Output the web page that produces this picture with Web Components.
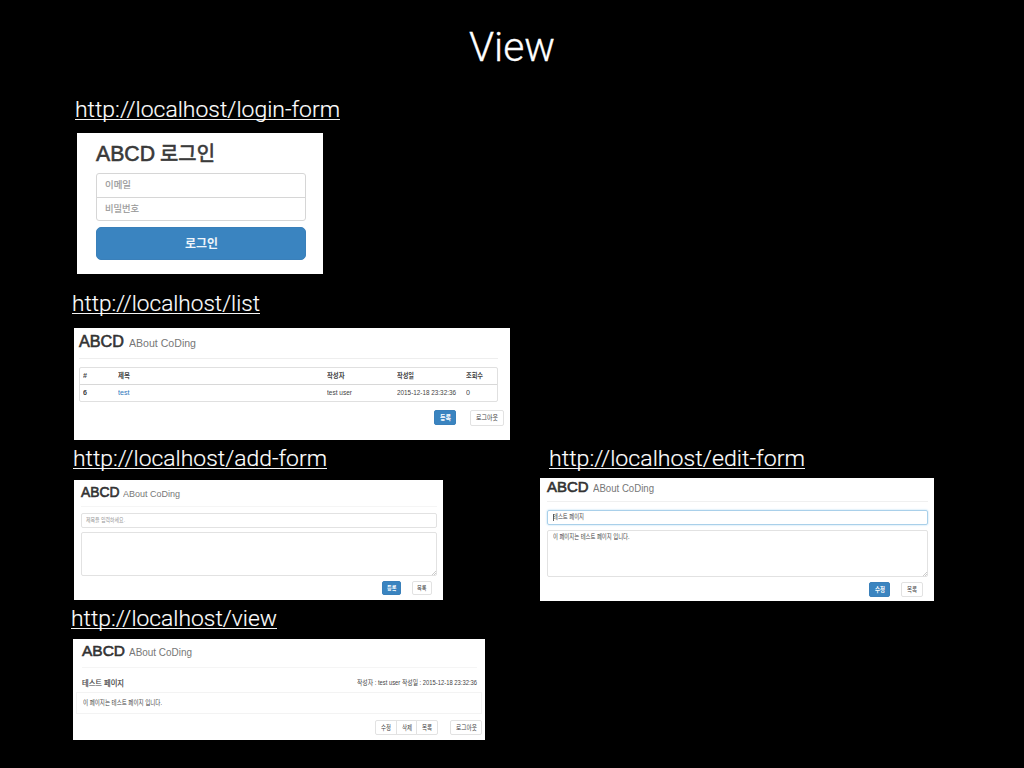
<!DOCTYPE html>
<html lang="ko">
<head>
<meta charset="utf-8">
<title>View</title>
<style>
body{margin:0;background:#000;width:1024px;height:768px;overflow:hidden}
</style>
</head>
<body>
<view-slide></view-slide>
<script>
const define = (name, css, html) => {
  const tpl = document.createElement('template');
  tpl.innerHTML = `<style>*{box-sizing:border-box}:host{display:block;box-sizing:border-box}${css}</style>${html}`;
  customElements.define(name, class extends HTMLElement {
    constructor() {
      super();
      this.attachShadow({mode: 'open'}).append(tpl.content.cloneNode(true));
    }
  });
};

/* One line of text, stretched to the width given in "w". */
class FitText extends HTMLElement {
  constructor() {
    super();
    this.attachShadow({mode: 'open'}).innerHTML =
      `<style>:host{display:block;flex:none;white-space:nowrap}span{display:inline-block;transform-origin:0 50%;vertical-align:top}</style><span><slot></slot></span>`;
  }
  connectedCallback() {
    const w = parseFloat(this.getAttribute('w'));
    this.style.width = w + 'px';
    const span = this.shadowRoot.querySelector('span');
    const natural = span.getBoundingClientRect().width;
    if (natural) span.style.transform = `scaleX(${w / natural})`;
  }
}

define('url-link',
  `:host{height:24px;width:max-content;border-bottom:1.5px solid #f4f4f4;font:300 22.5px/27px Roboto,"Noto Sans",sans-serif;color:#fff;-webkit-text-stroke:.15px #fff}`,
  `<slot></slot>`);

define('app-button',
  `:host{display:flex;flex:none;align-items:center;justify-content:center;border:1px solid #e2e2e2;border-radius:2px;background:#fff;color:#444;line-height:12px}
   :host([primary]){background:#3a84c0;border-color:#3a80ba;color:#fff;font-weight:700}`,
  `<slot></slot>`);

define('app-brand',
  `:host{display:flex;height:20px;line-height:19px;align-items:baseline}
   ::slotted([slot=name]){color:#333;-webkit-text-stroke:.6px #333}
   ::slotted([slot=sub]){color:#777}`,
  `<slot name="name"></slot><slot name="sub"></slot>`);

define('text-area',
  `:host{position:relative;border:1px solid #e2e2e2;border-radius:2px;background:#fff}
   svg{position:absolute;right:0;bottom:0}`,
  `<slot></slot><svg width="5" height="5" viewBox="0 0 5 5" stroke="#aaa" stroke-width=".6"><path d="M1 5 5 1M3 5 5 3"/></svg>`);

const base = `:host{background:#fff;font:7px/12px "Liberation Sans","Noto Sans CJK KR",sans-serif;color:#444}`;

define('login-panel', base + `
  :host{width:246px;height:141px;padding:10px 17px 0 19px}
  h1{display:flex;gap:5px;margin:0;font-size:21.5px;line-height:23px;font-weight:400;height:30px;color:#3a3a3a;-webkit-text-stroke:.6px #3a3a3a}
  h1 .ko{font-size:20px;-webkit-text-stroke:.6px #3a3a3a}
  .fields{height:48px;border:1px solid #d6d6d6;border-radius:3px;color:#999;font-size:9.5px;line-height:22px;-webkit-text-stroke:.2px #999}
  .fields div{padding-left:8px;height:23px}
  .fields div+div{border-top:1px solid #d6d6d6;line-height:21px}
  app-button{margin-top:6px;width:210px;height:33px;border-radius:5px;font-size:12.5px;color:#eef5fb}`,
  `<h1><fit-text w="59">ABCD</fit-text><fit-text class="ko" w="55">로그인</fit-text></h1>
   <div class="fields"><div><fit-text w="26">이메일</fit-text></div><div><fit-text w="34">비밀번호</fit-text></div></div>
   <app-button primary><fit-text w="33">로그인</fit-text></app-button>`);

define('list-panel', base + `
  :host{width:436px;height:112px;padding:4px 12px 0 5px}
  hr{margin:6px 0 8px;border:0;height:1px;background:#eee}
  .table{height:35px;border:1px solid #e0e0e0;border-radius:2px}
  .row{display:grid;grid-template-columns:35px 209px 69.5px 69.5px auto;height:16px;line-height:16px;padding-left:3px}
  .head{font-weight:700;height:17px;border-bottom:1px solid #d8d8d8;line-height:16px}
  .link{color:#2f78bd}
  .actions{display:flex;gap:14px;padding:8px 0 0 355px}`,
  `<app-brand><fit-text slot="name" w="45" style="font-size:16.3px">ABCD</fit-text><fit-text slot="sub" w="67" style="font-size:11.2px;margin-left:5px">ABout CoDing</fit-text></app-brand>
   <hr>
   <div class="table">
    <div class="row head"><fit-text w="4">#</fit-text><fit-text w="12">제목</fit-text><fit-text w="17.5">작성자</fit-text><fit-text w="17">작성일</fit-text><fit-text w="17">조회수</fit-text></div>
    <div class="row"><fit-text w="4" style="font-weight:700">6</fit-text><fit-text w="11.5" class="link">test</fit-text><fit-text w="25">test user</fit-text><fit-text w="59">2015-12-18 23:32:36</fit-text><fit-text w="4">0</fit-text></div>
   </div>
   <div class="actions"><app-button primary style="width:22px;height:15px"><fit-text w="11">등록</fit-text></app-button><app-button style="width:34px;height:16px"><fit-text w="22">로그아웃</fit-text></app-button></div>`);

define('add-panel', base + `
  :host{width:369px;height:120px;padding:2px 6px 0 7px;font-size:6px}
  hr{margin:4px 0 6px;border:0;height:1px;background:#f5f5f5}
  .input{height:15px;border:1px solid #e2e2e2;border-radius:2px;padding-left:4px;color:#999;line-height:12px}
  text-area{margin-top:4px;height:44px}
  .actions{display:flex;gap:11px;padding:5px 0 0 301px}
  app-button{height:14px}`,
  `<app-brand style="line-height:20px"><fit-text slot="name" w="38.5" style="font-size:14px">ABCD</fit-text><fit-text slot="sub" w="57" style="font-size:9.7px;margin-left:3.5px">ABout CoDing</fit-text></app-brand>
   <hr><div class="input"><fit-text w="39">제목을 입력하세요.</fit-text></div><text-area></text-area>
   <div class="actions"><app-button primary style="width:19px"><fit-text w="9.5">등록</fit-text></app-button><app-button style="width:20px"><fit-text w="9.5">목록</fit-text></app-button></div>`);

define('edit-panel', base + `
  :host{width:394px;height:123px;padding:0 6px 0 7px;font-size:6.3px}
  app-brand{margin-top:-1px}
  hr{margin:4px 0 8px;border:0;height:1px;background:#f0f0f0}
  .input{display:flex;height:15px;border:1px solid #a9d0ea;border-radius:2px;box-shadow:0 0 2px #a9d4f0;padding-left:5px;line-height:12px}
  .input i{width:1px;height:7px;margin:3px -1px 0 0;background:#666}
  text-area{margin-top:5px;height:47px;padding-left:5px}
  .actions{display:flex;gap:11px;padding:5px 0 0 322px}
  app-button{height:15px}`,
  `<app-brand style="line-height:20px"><fit-text slot="name" w="41.5" style="font-size:14.5px">ABCD</fit-text><fit-text slot="sub" w="61" style="font-size:10px;margin-left:4px">ABout CoDing</fit-text></app-brand>
   <hr><div class="input"><i></i><fit-text w="31">테스트 페이지</fit-text></div>
   <text-area><fit-text w="76.5">이 페이지는 테스트 페이지 입니다.</fit-text></text-area>
   <div class="actions"><app-button primary style="width:21px"><fit-text w="10">수정</fit-text></app-button><app-button style="width:22px"><fit-text w="10">목록</fit-text></app-button></div>`);

define('view-panel', base + `
  :host{width:412px;height:101px;padding:2px 3px 0 3px;font-size:6.6px}
  app-brand{margin-left:6px}
  hr{margin:6px 5px 9px 6px;border:0;height:1px;background:#f5f5f5}
  .head{display:flex;justify-content:space-between;height:15px;padding:0 5px 0 6px;line-height:11px}
  .title{font-size:7.6px;line-height:14px;-webkit-text-stroke:.2px #444}
  .content{height:22px;border:1px solid #f3f3f3;padding-left:6px;line-height:20px}
  .actions{display:flex;padding:6px 0 0 299px}
  app-button{height:15px;border-radius:0;margin-right:-1px}
  .first{border-radius:2px 0 0 2px}.last{border-radius:0 2px 2px 0}
  .out{margin-left:13px;border-radius:2px}`,
  `<app-brand><fit-text slot="name" w="43" style="font-size:15.4px">ABCD</fit-text><fit-text slot="sub" w="63" style="font-size:10.5px;margin-left:4px">ABout CoDing</fit-text></app-brand>
   <hr><div class="head"><fit-text class="title" w="42">테스트 페이지</fit-text><fit-text w="120">작성자 : test user 작성일 : 2015-12-18 23:32:36</fit-text></div>
   <div class="content"><fit-text w="79">이 페이지는 테스트 페이지 입니다.</fit-text></div>
   <div class="actions"><app-button class="first" style="width:22px"><fit-text w="10">수정</fit-text></app-button><app-button style="width:21px"><fit-text w="10">삭제</fit-text></app-button><app-button class="last" style="width:22px"><fit-text w="10">목록</fit-text></app-button><app-button class="out" style="width:32px"><fit-text w="21">로그아웃</fit-text></app-button></div>`);

define('view-slide', `
  :host{height:768px;padding-top:20px;background:#000;color:#fff}
  header{display:flex;justify-content:center;height:76px;font:300 40px/55px Roboto,"Noto Sans",sans-serif;-webkit-text-stroke:.3px #fff}
  section{display:flex;flex-direction:column;align-items:flex-start}
  .login{height:194px;padding-left:75px;gap:13px}
  .list{height:155px;padding-left:72px;gap:14px}
  .forms{display:flex;height:160px;padding-left:73px}
  .forms .add{width:467px;gap:11px}
  .forms .edit{gap:9px}
  .view{padding-left:71px;gap:10px}`,
  `<header><fit-text w="86">View</fit-text></header>
   <section class="login"><url-link><fit-text w="265">http://localhost/login-form</fit-text></url-link><login-panel style="margin-left:2px"></login-panel></section>
   <section class="list"><url-link><fit-text w="188">http://localhost/list</fit-text></url-link><list-panel style="margin-left:2px"></list-panel></section>
   <div class="forms">
    <section class="add"><url-link><fit-text w="254">http://localhost/add-form</fit-text></url-link><add-panel style="margin-left:1px"></add-panel></section>
    <section class="edit"><url-link style="margin-left:9px"><fit-text w="256">http://localhost/edit-form</fit-text></url-link><edit-panel></edit-panel></section>
   </div>
   <section class="view"><url-link><fit-text w="206">http://localhost/view</fit-text></url-link><view-panel style="margin-left:2px"></view-panel></section>`);

customElements.define('fit-text', FitText);
</script>
</body>
</html>
